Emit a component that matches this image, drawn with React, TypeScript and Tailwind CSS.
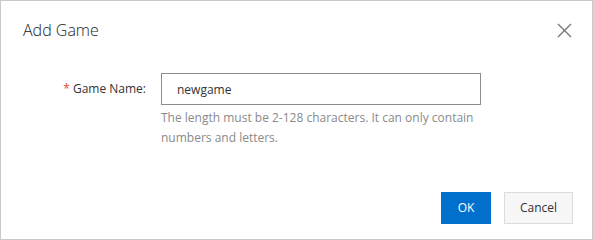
export default function App() {
  return (
    <div className="w-[593px] h-[240px] border border-[#c9c9c9] bg-white flex flex-col font-['Open_Sans',sans-serif] text-[#333]">
      {/* Header */}
      <div className="flex items-center justify-between pl-[22px] pr-[16px] pt-[17px]">
        <h2 className="text-[16px] leading-6 font-light text-[#222]">Add Game</h2>
        <button className="w-6 h-6 flex items-center justify-center text-[#777]">
          <svg width="15" height="15" viewBox="0 0 15 15" fill="none" stroke="currentColor" strokeWidth="1.4">
            <path d="M1 1L14 14M14 1L1 14" />
          </svg>
        </button>
      </div>

      {/* Form */}
      <div className="flex items-start pt-[31px]">
        <label className="w-[160px] h-8 flex items-center justify-end pr-[15px] text-[12px] whitespace-nowrap">
          <span className="text-[#e64a3b] mr-[3px]">*</span>
          Game Name:
        </label>
        <div className="w-[320px]">
          <input
            defaultValue="newgame"
            className="w-full h-8 border border-[#8c8c8c] px-[15px] text-[12px] text-[#333] outline-none"
          />
          <p className="mt-[3px] text-[12px] leading-5 text-[#8a8a8a]">
            The length must be 2-128 characters. It can only contain numbers and letters.
          </p>
        </div>
      </div>

      {/* Footer */}
      <div className="mt-auto flex justify-end gap-[13px] pr-[19px] pb-[15px]">
        <button className="w-[50px] h-8 bg-[#0070cc] text-white text-[12px]">OK</button>
        <button className="w-[69px] h-8 bg-[#f7f7f7] border border-[#dcdcdc] text-[#333] text-[12px]">
          Cancel
        </button>
      </div>
    </div>
  );
}
